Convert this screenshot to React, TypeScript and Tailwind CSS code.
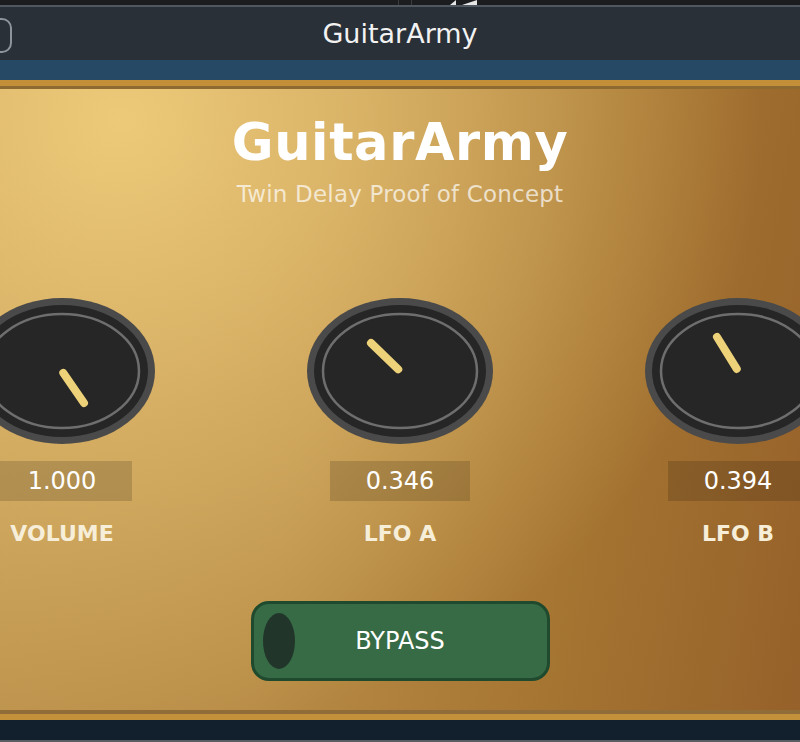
import React from "react";

// Knob drawn as stacked ellipses with a pointer line from the centre
interface KnobProps {
  label: string;
  value: string;
  dx: number;
  dy: number;
}

function Knob({ label, value, dx, dy }: KnobProps) {
  return (
    <div className="flex w-[338px] shrink-0 flex-col items-center">
      <svg width="186" height="146" viewBox="0 0 186 146">
        <ellipse cx="93" cy="73" rx="93" ry="73" fill="#4a4a4a" />
        <ellipse cx="93" cy="73" rx="86" ry="66" fill="#262626" />
        <ellipse cx="93" cy="73" rx="77" ry="57" fill="none" stroke="#6e6e6e" strokeWidth="2.5" />
        <line
          x1={93 + dx * 0.06}
          y1={73 + dy * 0.06}
          x2={93 + dx}
          y2={73 + dy}
          stroke="#eed27a"
          strokeWidth="8"
          strokeLinecap="round"
        />
      </svg>
      <div className="mt-[17px] flex h-[40px] w-[140px] items-center justify-center bg-black/15 text-[24px] leading-none text-white">
        {value}
      </div>
      <div className="mt-[22px] text-[22px] font-bold leading-none text-[#f6eed8]">{label}</div>
    </div>
  );
}

export default function App() {
  return (
    <div className="h-[742px] w-[800px] overflow-hidden bg-[#121f2d] font-['DejaVu_Sans',sans-serif]">
      {/* host window strip */}
      <div className="relative h-[5px] overflow-hidden bg-[#1c1d1e]">
        <div className="absolute left-[398px] top-0 h-full w-px bg-[#3c3c3c]" />
        <div className="absolute left-[411px] top-0 h-full w-px bg-[#3c3c3c]" />
        <svg className="absolute left-[450px] top-0" width="28" height="5" viewBox="0 0 28 5">
          <path d="M0 5 L6 0 L6 5 Z" fill="#e6e6e6" />
          <path d="M12 5 L27 0 L27 5 Z" fill="#e6e6e6" />
        </svg>
        <span className="absolute left-[497px] top-[-17px] text-[20px] leading-none text-[#d8d8d8]">Music</span>
      </div>
      <div className="h-[2px] bg-[#4f5861]" />

      {/* plugin title bar */}
      <div className="relative flex h-[53px] items-center justify-center bg-[#293038]">
        <div className="absolute left-[-22px] top-[11px] h-[35px] w-[34px] rounded-[10px] border-2 border-[#8e949a]" />
        <span className="text-[27px] leading-none text-[#f2f2f2]">GuitarArmy</span>
      </div>
      <div className="h-[20px] bg-[#264a66]" />
      <div className="h-[6px] bg-[#c38f38]" />
      <div className="h-[3px] bg-[#8f6a30]" />

      {/* gold panel */}
      <div className="flex h-[621px] flex-col items-center overflow-hidden bg-[radial-gradient(ellipse_80%_100%_at_15%_5%,rgba(238,203,123,0.97),rgba(238,203,123,0)_100%),linear-gradient(100deg,#c09650_0%,#b88c46_40%,#a67632_70%,#96612a_100%)] pt-[28px]">
        <h1 className="text-[51px] font-bold leading-none tracking-[0.6px] text-white">GuitarArmy</h1>
        <p className="mt-[15px] text-[23px] leading-none tracking-[0.2px] text-white/70">
          Twin Delay Proof of Concept
        </p>

        <div className="mt-[92px] flex w-full justify-center">
          <Knob label="VOLUME" value="1.000" dx={22} dy={32} />
          <Knob label="LFO A" value="0.346" dx={-29} dy={-28} />
          <Knob label="LFO B" value="0.394" dx={-21} dy={-34} />
        </div>

        <button className="mt-[56px] grid h-[80px] w-[299px] grid-cols-[41px_1fr_41px] items-center rounded-[18px] border-[3px] border-[#1f4a2e] bg-[#366b45]">
          <span className="ml-[9px] h-[56px] w-[32px] rounded-[50%] bg-[#22352a]" />
          <span className="text-center text-[24px] leading-none text-white">BYPASS</span>
          <span />
        </button>
      </div>

      <div className="h-[4px] bg-[#8f6c38]" />
      <div className="h-[6px] bg-[#c3913a]" />
      <div className="h-[20px] bg-[#121f2d]" />
      <div className="h-[2px] bg-[#5a5f66]" />
    </div>
  );
}
